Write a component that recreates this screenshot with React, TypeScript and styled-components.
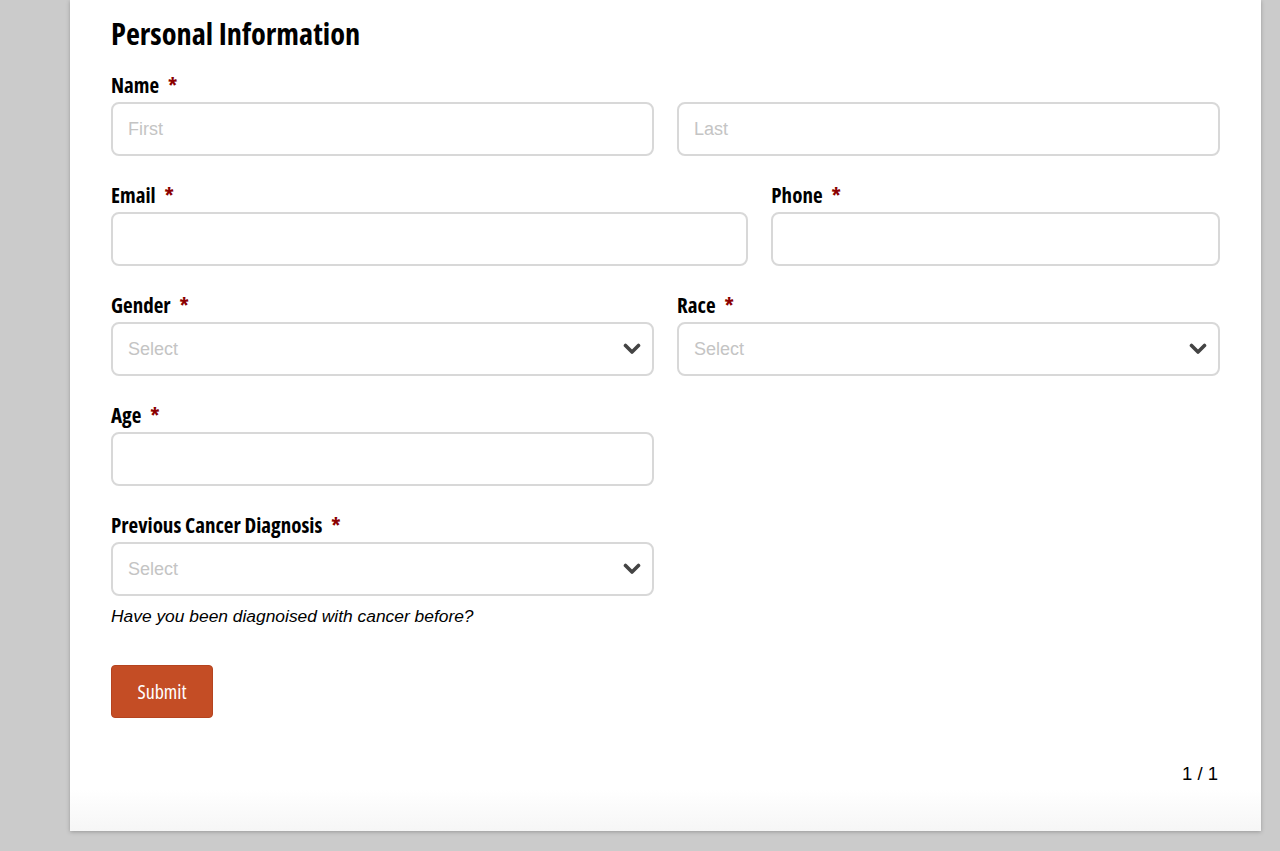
import React from 'react';
import styled, { createGlobalStyle } from 'styled-components';

const GlobalStyle = createGlobalStyle`
  html, body {
    margin: 0;
    padding: 0;
    background: #cbcbcb;
  }
  * {
    box-sizing: border-box;
  }
`;

const Chevron: React.FC = () => (
  <svg width="18" height="12" viewBox="0 0 18 12">
    <path d="M2.5 2.5 L9 9 L15.5 2.5" fill="none" stroke="#444" strokeWidth="3.6" strokeLinecap="round" strokeLinejoin="round" />
  </svg>
);

const Field: React.FC<{ label: string; span: number; newRow?: boolean; children: React.ReactNode }> = ({
  label,
  span,
  newRow,
  children,
}) => (
  <FieldBox $span={span} $newRow={newRow}>
    <Label>
      {label}
      <Required>*</Required>
    </Label>
    {children}
  </FieldBox>
);

const SelectInput: React.FC = () => (
  <SelectBox>
    <Placeholder>Select</Placeholder>
    <Chevron />
  </SelectBox>
);

const App: React.FC = () => {
  return (
    <>
      <GlobalStyle />
      <Page>
        <Card>
          <Heading>Personal Information</Heading>
          <FormGrid>
            <Field label="Name" span={12}>
              <Pair>
                <TextInput placeholder="First" />
                <TextInput placeholder="Last" />
              </Pair>
            </Field>
            <Field label="Email" span={7}>
              <TextInput />
            </Field>
            <Field label="Phone" span={5}>
              <TextInput />
            </Field>
            <Field label="Gender" span={6}>
              <SelectInput />
            </Field>
            <Field label="Race" span={6}>
              <SelectInput />
            </Field>
            <Field label="Age" span={6} newRow>
              <TextInput />
            </Field>
            <Field label="Previous Cancer Diagnosis" span={6} newRow>
              <SelectInput />
              <Help>Have you been diagnoised with cancer before?</Help>
            </Field>
          </FormGrid>
          <SubmitButton>Submit</SubmitButton>
          <PageCount>1 / 1</PageCount>
        </Card>
      </Page>
    </>
  );
};

const Page = styled.div`
  min-height: 851px;
  padding-left: 70px;
`;

const Card = styled.div`
  width: 1191px;
  height: 831px;
  padding: 16px 41px 0 41px;
  background: linear-gradient(to bottom, #fff 0, #fff 790px, #f6f6f6 831px);
  box-shadow: 0 1px 4px rgba(0, 0, 0, 0.25);
  display: flex;
  flex-direction: column;
`;

const condensed = `
  font-family: "Open Sans", "DejaVu Sans", sans-serif;
  font-stretch: 75%;
`;

const Heading = styled.h1`
  ${condensed}
  font-size: 30.4px;
  line-height: 36px;
  font-weight: 700;
  color: #000;
  margin: 0 0 21px 0;
`;

const FormGrid = styled.div`
  display: grid;
  grid-template-columns: repeat(12, 1fr);
  column-gap: 23px;
  row-gap: 27px;
`;

const FieldBox = styled.div<{ $span: number; $newRow?: boolean }>`
  grid-column: ${({ $span, $newRow }) => ($newRow ? `1 / span ${$span}` : `span ${$span}`)};
  display: flex;
  flex-direction: column;
`;

const Label = styled.label`
  ${condensed}
  font-size: 21px;
  line-height: 24px;
  font-weight: 700;
  color: #000;
  margin-bottom: 5px;
`;

const Required = styled.span`
  color: #8b0000;
  margin-left: 9px;
`;

const Pair = styled.div`
  display: grid;
  grid-template-columns: 1fr 1fr;
  column-gap: 23px;
`;

const TextInput = styled.input`
  height: 54px;
  width: 100%;
  border: 2px solid #d8d8d8;
  border-radius: 8px;
  padding: 0 15px;
  font-family: "Liberation Sans", Arial, sans-serif;
  font-size: 18px;
  color: #333;
  background: #fff;
  outline: none;

  &::placeholder {
    color: #c4c4c4;
  }
`;

const SelectBox = styled.div`
  height: 54px;
  border: 2px solid #d8d8d8;
  border-radius: 8px;
  padding: 0 11px 0 15px;
  display: flex;
  align-items: center;
  justify-content: space-between;
  background: #fff;
`;

const Placeholder = styled.span`
  font-family: "Liberation Sans", Arial, sans-serif;
  font-size: 18px;
  color: #c4c4c4;
`;

const Help = styled.p`
  font-family: "Liberation Sans", Arial, sans-serif;
  font-style: italic;
  font-size: 17.4px;
  line-height: 20px;
  color: #000;
  margin: 10px 0 0 0;
`;

const SubmitButton = styled.button`
  ${condensed}
  align-self: flex-start;
  margin-top: 39px;
  width: 102px;
  height: 53px;
  background: #c44d25;
  color: #fff;
  border: 1px solid #b5441f;
  border-radius: 4px;
  font-size: 20px;
  font-weight: 400;
  cursor: pointer;
`;

const PageCount = styled.div`
  align-self: flex-end;
  margin-top: 45px;
  margin-right: 2px;
  font-family: "Liberation Sans", Arial, sans-serif;
  font-size: 18.5px;
  line-height: 22px;
  color: #000;
`;

export default App;
